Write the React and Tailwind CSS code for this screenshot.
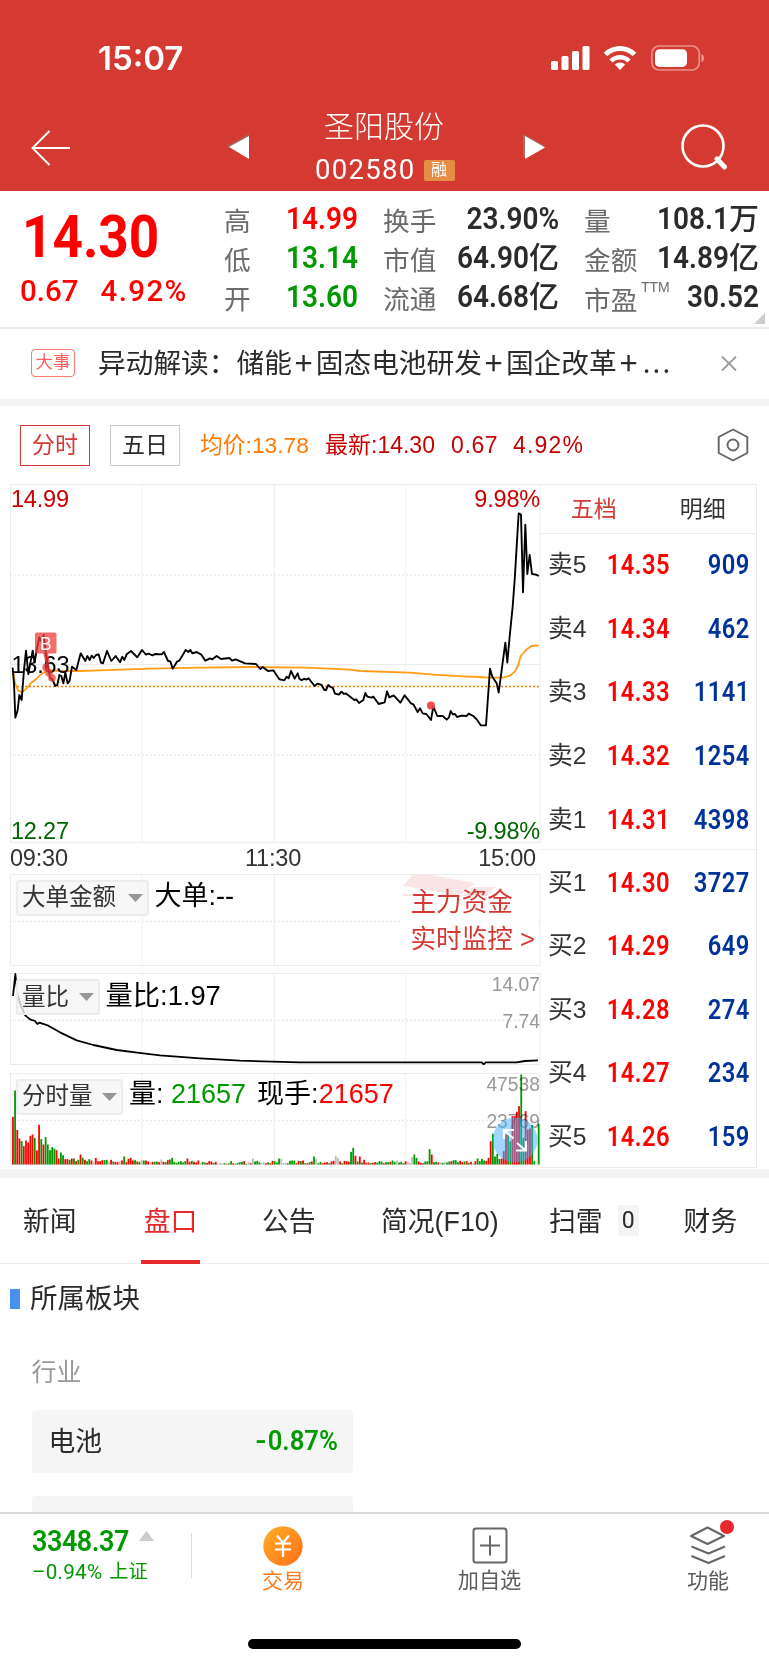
import React from "react";

const RED = "#fe0000";
const GREEN = "#009a00";

// [height, colour] of the first minutes; colours: r = up, g = down, n = unchanged
const OPENING = "143r 222g 104r 78r 70g 55r 72r 66r 86r 90r 80g 42r 119r 76g 60r 82g 60g 43g 52g 48g 43r 18r 36g 28g 16r 16r 14g 18r 18g 10r 14g 30r 20g 14r 10g 16g 12r 8n 20r 10r";
const CLOSING = "20r 70r 92g 24g 32g 17g 18r 40r 90r 90g 70g 145r 145r 158r 175r 270g 80g 160r 105r 108r 118g 10g 0g 122g";
const PEAKS = { 51: "24g", 53: "17r", 54: "20r", 72: "15g", 73: "20g", 80: "18r", 110: "18n", 122: "18g", 123: "17n", 138: "24g", 139: "18n", 148: "26n", 149: "20n", 155: "38g", 156: "50g", 157: "26r", 159: "24r", 161: "14r", 184: "30g", 185: "20g", 183: "22n", 191: "46g", 192: "30r", 213: "18g", 215: "17g", 218: "26r" };
const parse = (s) => ({ h: parseInt(s, 10), c: s.slice(-1) });

function volumeBars() {
  const open = OPENING.split(" ").map(parse);
  const close = CLOSING.split(" ").map(parse);
  const bars = [];
  for (let i = 0; i < 242; i++) {
    if (i < open.length) bars.push(open[i]);
    else if (i >= 242 - close.length) bars.push(close[i - 242 + close.length]);
    else if (PEAKS[i]) bars.push(parse(PEAKS[i]));
    else {
      const n = (i * 7919 + ((i * i * 31) % 97)) % 101;
      const base = i < 75 ? 7 : i > 85 && i < 108 ? 2 : i > 200 ? 5 : 4;
      bars.push({ h: base + (n % 9), c: n % 7 === 0 ? "n" : n % 2 ? "r" : "g" });
    }
  }
  return bars;
}
const BARS = volumeBars();
const BAR_FILL = { r: RED, g: GREEN, n: "#bcbcbc" };

function Grid({ top, bottom, mid, quarters = [] }) {
  return (
    <g stroke="#ebebeb" fill="none">
      <rect x="10.5" y={top} width="529.5" height={bottom - top} />
      <path d={`M274.3 ${top}V${bottom}`} />
      {mid && <path d={`M10 ${mid}H540`} />}
      <g strokeDasharray="2 2" strokeWidth="1.3">
        <path d={`M142 ${top}V${bottom}M405.5 ${top}V${bottom}`} />
        {quarters.map((y) => (
          <path key={y} d={`M10 ${y}H540`} />
        ))}
      </g>
    </g>
  );
}

function PriceChart() {
  return (
    <div className="relative h-[359px]">
      <svg className="block h-[359px] w-[531px]" viewBox="10 484 531 359">
        <Grid top={484.5} bottom={842.3} mid={664.5} quarters={[575, 755]} />
        <path d="M13 686.5H539" stroke="#ff7a00" strokeWidth="1.6" strokeDasharray="2 2" />
        <g fill="none" strokeLinejoin="round" strokeLinecap="round">
          <g stroke="#ff9d14" strokeWidth="5.4">
            <polyline transform="translate(0 600) scale(.33333)" points="38,205 45,250 55,272 66,277 80,265 92,250 108,238 120,225 145,210 180,213 240,213 300,211 450,206 600,203 760,201 840,202" />
            <polyline transform="translate(280 600) scale(.33333)" points="0,202 80,203 210,209 240,213 390,218 460,224 550,229 600,231 625,233 670,233 690,227 705,214 715,195 722,168 740,148 755,138 774,136" />
          </g>
          <g stroke="#000" strokeWidth="5.6">
            <polyline transform="translate(0 600) scale(.33333)" points="38,205 42,250 46,353 53,330 58,285 65,300 72,210 78,152 85,222 91,190 98,152 104,188 110,150 118,112 124,125 131,105 138,165 144,200 150,232 158,240 166,258 172,255 178,225 184,228 190,250 196,218 203,250 209,242 216,200 229,210 242,160 256,183 262,168 269,180 275,167 281,174 288,165 296,163 303,188 309,190 321,153 334,183 347,168 360,187 367,170 373,180 380,163 393,153 412,172 426,150 438,164 445,161 458,166 465,162 485,163 492,156 504,183 511,184 518,206 531,185 538,182 557,150 565,156 571,150 577,160 590,156 604,164 616,182 630,175 637,178 650,168 663,177 688,174 696,182 707,178 735,190 768,192 781,207 788,201 804,213 820,211 838,238" />
            <polyline transform="translate(280 600) scale(.33333)" points="0,238 13,241 20,230 26,235 33,213 44,236 53,220 58,236 65,241 72,236 78,239 86,235 92,243 104,258 112,251 125,255 133,270 138,270 145,255 153,262 158,262 165,281 177,284 184,275 192,282 197,280 223,300 229,298 237,309 250,300 256,279 262,290 275,293 280,290 296,312 314,307 321,274 328,292 341,286 361,308 374,286 393,310 400,313 413,336 420,325 428,340 439,342 453,360 460,320 472,348 488,348 500,359 507,352 512,333 518,343 525,342 531,351 545,347 560,348 566,341 580,348 590,358 602,376 618,376 630,206 637,230 650,250 656,278 676,128 682,188 688,120 698,20 704,-60 716,-260 723,-256 729,-23 736,-226 742,-78 749,-135 756,-78 768,-76 774,-73" />
          </g>
        </g>
        <circle cx="431" cy="705.5" r="4" fill="#ef3d3d" fillOpacity=".9" />
        <text x="11.500" y="672.5" fontSize="23.500" letterSpacing="-0.2" fill="#000" className="font-['Liberation_Sans']">13.63</text>
        <g fill="#ee3c3c" fillOpacity=".75">
          <path d="M43 653h5l2 10-4 2z" />
          <circle cx="46" cy="667.5" r="3.8" />
          <circle cx="49" cy="673" r="3.8" />
          <circle cx="52" cy="678" r="3.8" />
          <rect x="35" y="632.5" width="21.5" height="21" rx="1.5" />
        </g>
        <text x="45.8" y="649.5" fontSize="17.5" textAnchor="middle" fill="#fff" className="font-['Liberation_Sans']">B</text>
      </svg>
      <span className="absolute top-[1px] left-[1px] text-[23.5px] leading-[28px] tracking-[-0.2px] text-[#c80000]">14.99</span>
      <span className="absolute top-[1px] right-0 text-[23.5px] leading-[28px] tracking-[-0.2px] text-[#c80000]">9.98%</span>
      <span className="absolute bottom-[-2px] left-[1px] text-[23.5px] leading-[28px] tracking-[-0.2px] text-[#006400]">12.27</span>
      <span className="absolute right-0 bottom-[-2px] text-[23.5px] leading-[28px] tracking-[-0.2px] text-[#006400]">-9.98%</span>
    </div>
  );
}

function Dropdown({ label, width }) {
  return (
    <div className={`flex h-[36px] items-center justify-between rounded-[3px] border-2 border-[#ececec] bg-[#f5f5f5]/80 pr-[4px] pl-[4px] text-[23.5px] leading-none text-[#333] ${width}`}>
      <span className="pt-[1px]">{label}</span>
      <svg className="h-[8px] w-[15px]" viewBox="0 0 15 8"><path d="M0 0H15L7.5 8Z" fill="#969696" /></svg>
    </div>
  );
}

function SubCharts() {
  return (
    <div className="flex flex-col gap-[7.5px]">
      <div className="relative h-[92px]">
        <svg className="block h-[92px] w-[531px]" viewBox="10 873.5 531 92">
          <Grid top={874} bottom={965} quarters={[921]} />
        </svg>
        <div className="absolute top-[6px] left-[6px] flex items-center gap-[6px] text-[27px] leading-none text-black">
          <Dropdown label="大单金额" width="w-[132.5px]" />
          <span className="pb-[2px]">大单:--</span>
        </div>
        <div className="absolute top-[1px] right-[3px] h-[90px] w-[134px] bg-white">
          <svg className="absolute top-0 left-0 h-[24px] w-[100px]" viewBox="0 0 100 24" fill="#d43a32">
            <path d="M0 11L9 0H28L72 8L55 22L26 15Z" fillOpacity=".13" />
            <path d="M70 12H93L84 21H60Z" fillOpacity=".13" />
            <path d="M0 19H28V21H0Z" fillOpacity=".13" />
          </svg>
          <div className="relative pt-[9px] pl-[7.5px] text-[25.6px] leading-[37px] whitespace-nowrap text-[#d43a32]">
            <div>主力资金</div>
            <div>实时监控 <span>&gt;</span></div>
          </div>
        </div>
      </div>
      <div className="relative h-[92px]">
        <svg className="block h-[92px] w-[531px]" viewBox="10 973 531 92">
          <Grid top={973.5} bottom={1064.5} quarters={[1020.5]} />
          <g fill="none" stroke="#000" strokeWidth="5.4" strokeLinejoin="round">
            <polyline transform="translate(0 860) scale(.33333)" points="39,408 46,342 52,400 60,430 75,465 80,470 90,478 105,483 112,492 118,488 145,497 180,517 230,541 280,555 350,570 430,580 480,586 600,595 720,602 900,607 1140,607" />
            <polyline transform="translate(380 860) scale(.33333)" points="0,607 305,607 311,613 317,607 410,607 435,603 474,601" />
          </g>
        </svg>
        <div className="absolute top-[6px] left-[6px] flex items-center gap-[6px] text-[27.3px] leading-none text-black">
          <Dropdown label="量比" width="w-[83.5px]" />
          <span className="pb-[3px]">量比:1.97</span>
        </div>
        <span className="absolute top-0 right-0 text-[19.3px] leading-[23px] text-[#999]">14.07</span>
        <span className="absolute top-[37px] right-0 text-[19.3px] leading-[23px] text-[#999]">7.74</span>
      </div>
      <div className="relative h-[92px]">
        <svg className="block h-[92px] w-[531px]" viewBox="10 1072.5 531 92">
          <Grid top={1073} bottom={1164} quarters={[1120]} />
          <g transform="translate(12 1164) scale(.33333)">
            {BARS.map((b, i) => (
              <rect key={i} x={(i * 6.545).toFixed(1)} y={-b.h} width="5.4" height={b.h} fill={BAR_FILL[b.c]} />
            ))}
          </g>
        </svg>
        <div className="absolute top-[6px] left-[6px] flex items-center text-[27px] leading-none whitespace-nowrap text-black">
          <Dropdown label="分时量" width="w-[107px]" />
          <span className="ml-[6px] pb-[4px]">量: <span className="text-[#009a00]">21657</span></span>
          <span className="ml-[11px] pb-[4px]">现手:<span className="text-[#fe0000]">21657</span></span>
        </div>
        <span className="absolute top-0 right-0 text-[19.3px] leading-[23px] text-[#999] mix-blend-multiply">47538</span>
        <span className="absolute top-[37px] right-0 text-[19.3px] leading-[23px] text-[#999] mix-blend-multiply">23769</span>
        <svg className="absolute top-[44px] left-[482px] h-[46px] w-[46px]" viewBox="0 0 46 46">
          <circle cx="23" cy="23" r="22.500" fill="#40b0ff" fillOpacity=".5" />
          <path d="M12 22V13H22M12.500 13.500L21.500 21.500M25 26L33 33M34 24V33.500H24" fill="none" stroke="#fff" strokeWidth="2.200" />
        </svg>
      </div>
    </div>
  );
}

const BOOK = [
  ["卖5", "14.35", "909"], ["卖4", "14.34", "462"], ["卖3", "14.33", "1141"], ["卖2", "14.32", "1254"], ["卖1", "14.31", "4398"],
  ["买1", "14.30", "3727"], ["买2", "14.29", "649"], ["买3", "14.28", "274"], ["买4", "14.27", "234"], ["买5", "14.26", "159"],
];
const ROW_BOX = { 4: "h-[61px] pt-[3px]", 5: "h-[66px] pt-[2px] border-t border-[#f0f0f0]" };

function OrderBook() {
  return (
    <div className="h-[684px] w-[217px] border border-l-0 border-[#ebebeb]">
      <div className="flex h-[49px] items-center border-b border-[#ebebeb] text-[23px] leading-none text-[#333]">
        <span className="w-[108px] text-center text-[#d43a32]">五档</span>
        <span className="w-[109px] pl-[2px] text-center">明细</span>
      </div>
      {BOOK.map(([side, price, qty], i) => (
        <div key={side} className={`flex items-center pr-[6px] pl-[8px] leading-none ${ROW_BOX[i] || "h-[63.5px]"}`}>
          <span className="w-[40px] text-[24.7px] whitespace-nowrap text-[#333]">{side}</span>
          <span className="w-[82px] origin-right scale-x-[0.88] text-right font-['Roboto'] text-[27px] font-semibold tracking-[0.5px] text-[#fe0000]">{price}</span>
          <span className="ml-auto origin-right scale-x-[0.88] font-['Roboto'] text-[27px] font-semibold tracking-[0.5px] text-[#003399]">{qty}</span>
        </div>
      ))}
    </div>
  );
}

function Stat({ label, value, unit, color = "text-[#2b2b2b]", sup }) {
  return (
    <div className="flex h-[39px] items-center justify-between leading-none">
      <span className={`relative text-[26.7px] text-[#6b6b6b] ${sup ? "pt-[4px]" : "pt-[1px]"}`}>
        {label}
        {sup && <span className="absolute top-[-4px] left-[57px] text-[14px]">{sup}</span>}
      </span>
      <span className="flex items-center pb-[5px]">
        <span className={`origin-right scale-x-[0.89] font-['Roboto'] text-[31.5px] font-semibold ${color}`}>{value}</span>
        {unit && <span className="text-[30px] font-medium text-[#2b2b2b]">{unit}</span>}
      </span>
    </div>
  );
}

function Header() {
  return (
    <header className="h-[191px] bg-[#d43a32] text-white">
      <div className="flex h-[100px] items-center pt-[15px] pr-[64px] pl-[98px]">
        <span className="pt-[1px] font-['Inter'] text-[33px] leading-none font-semibold">15:07</span>
        <svg className="ml-auto h-[26px] w-[154px]" viewBox="551 44 154 26" fill="#fff">
          <rect x="551" y="60" width="7" height="9" rx="1.6" />
          <rect x="561.500" y="55" width="7" height="14" rx="1.600" />
          <rect x="572" y="50" width="7" height="19" rx="1.6" />
          <rect x="582.500" y="45" width="7" height="24" rx="1.600" />
          <g fill="none" stroke="#fff" strokeWidth="5">
            <path d="M605.500 53.500A20.500 20.500 0 0 1 634.500 53.500" />
            <path d="M611 60A12.500 12.500 0 0 1 629 60" strokeWidth="4.500" />
          </g>
          <path d="M620 69L614.800 63.600A7.400 7.400 0 0 1 625.200 63.600Z" />
          <rect x="651.800" y="45" width="47.500" height="24" rx="7.500" fill="none" stroke="#fff" strokeOpacity=".45" strokeWidth="1.700" />
          <rect x="655" y="48.200" width="32" height="17.700" rx="4.500" />
          <path d="M701.500 53V61Q704 60 704 57T701.500 53Z" fillOpacity=".5" />
        </svg>
      </div>
      <div className="flex h-[91px] items-start pl-[31px]">
        <svg className="mt-[29px] h-[38px] w-[40px]" viewBox="0 0 40 38" fill="none" stroke="#fff" strokeWidth="1.900">
          <path d="M18.500 2L1.500 19L18.500 36M1.500 19H39" />
        </svg>
        <svg className="mt-[34px] ml-[155px] h-[25px] w-[23px]" viewBox="0 0 23 25">
          <path d="M1 12L23 0V24Z" fill="#8b8078" fillOpacity=".6" /><path d="M3 13L23 2V25Z" fill="#fff" />
        </svg>
        <div className="ml-[66px] flex w-[140px] flex-col items-start">
          <div className="ml-[9px] h-[53px] pt-[12px] text-[30px] leading-[30px] font-light whitespace-nowrap">圣阳股份</div>
          <div className="flex h-[34px] items-center">
            <span className="font-['Roboto'] text-[27.5px] leading-none tracking-[1.3px]">002580</span>
            <span className="ml-[8px] flex h-[21px] w-[31px] items-center justify-center rounded-[2px] bg-[#e58d45] text-[16px] leading-none">融</span>
          </div>
        </div>
        <svg className="mt-[34px] ml-[68px] h-[25px] w-[23px]" viewBox="0 0 23 25">
          <path d="M0 0V24L22 12Z" fill="#8b8078" fillOpacity=".8" /><path d="M2 2V25L22 13.500Z" fill="#fff" />
        </svg>
        <svg className="mt-[24px] ml-[135px] h-[48px] w-[48px]" viewBox="0 0 48 48" fill="none" stroke="#fff">
          <circle cx="22" cy="22" r="20.500" strokeWidth="2.600" />
          <path d="M36 35L43.500 43" strokeWidth="5" strokeLinecap="round" />
        </svg>
      </div>
    </header>
  );
}

const Plus = () => <span className="mx-[4.3px] inline-block scale-[1.15]">+</span>;

export default function App() {
  return (
    <div className="flex h-[1665px] w-[769px] flex-col overflow-hidden bg-white font-['Liberation_Sans','Noto_Sans_CJK_SC',sans-serif]">
      <Header />

      <section className="relative flex h-[138px] border-b-2 border-[#ebebeb]">
        <div className="w-[224px] pl-[20px] leading-none text-[#fe0000]">
          <div className="mt-[16px] ml-[2px] h-[60px] w-[150px] origin-left scale-x-[0.9] font-['Roboto'] text-[59px] leading-[60px] font-bold">14.30</div>
          <div className="mt-[8px] flex gap-[22px] font-['Roboto'] text-[29.5px] leading-[33px] font-medium whitespace-nowrap">
            <span>0.67</span><span className="tracking-[1.4px]">4.92%</span>
          </div>
        </div>
        <div className="w-[134px] pt-[11px]">
          <Stat label="高" value="14.99" color="text-[#fe0000]" />
          <Stat label="低" value="13.14" color="text-[#009a00]" />
          <Stat label="开" value="13.60" color="text-[#009a00]" />
        </div>
        <div className="ml-[25px] w-[176px] pt-[11px]">
          <Stat label="换手" value="23.90%" />
          <Stat label="市值" value="64.90" unit="亿" />
          <Stat label="流通" value="64.68" unit="亿" />
        </div>
        <div className="ml-[25px] w-[175px] pt-[11px]">
          <Stat label="量" value="108.1" unit="万" />
          <Stat label="金额" value="14.89" unit="亿" />
          <Stat label="市盈" value="30.52" sup="TTM" />
        </div>
        <svg className="absolute right-[4px] bottom-[3px] h-[11px] w-[11px]" viewBox="0 0 11 11"><path d="M11 0V11H0Z" fill="#ccc" /></svg>
      </section>

      <section className="flex h-[70px] items-center pb-[2px] pl-[31px] leading-none">
        <span className="flex h-[28px] w-[44px] items-center justify-center rounded-[4px] border-[1.5px] border-[#ff7a70] text-[17.5px] text-[#ff5f55]">大事</span>
        <span className="ml-[23px] pb-[2px] text-[27.7px] whitespace-nowrap text-[#2b2b2b] font-['Noto_Sans_CJK_SC']">
          异动解读：储能<Plus />固态电池研发<Plus />国企改革<Plus /><span className="ml-[2px] tracking-[2.2px]">...</span>
        </span>
        <svg className="mr-[32px] ml-auto h-[15px] w-[16px]" viewBox="0 0 16 15"><path d="M1 .5L15 14.500M15 .5L1 14.500" stroke="#999" strokeWidth="1.800" /></svg>
      </section>
      <div className="h-[7px] bg-[#f4f4f4]" />

      <section className="flex h-[78px] items-center pl-[20px] text-[23px] leading-none whitespace-nowrap text-[#c80000]">
        <span className="flex h-[41px] w-[70px] items-center justify-center border border-[#d43a32] text-[#d43a32]">分时</span>
        <span className="ml-[20px] flex h-[41px] w-[70px] items-center justify-center border border-[#ccc] text-[#2b2b2b]">五日</span>
        <span className="ml-[20px] w-[125px] text-[22.8px] text-[#ff7a00]">均价:13.78</span>
        <span className="w-[126px]">最新:14.30</span>
        <span className="w-[62px] tracking-[0.6px]">0.67</span>
        <span className="tracking-[1.2px]">4.92%</span>
        <svg className="mr-[20px] ml-auto h-[34px] w-[32px]" viewBox="0 0 32 34" fill="none" stroke="#666" strokeWidth="1.900" strokeLinejoin="round">
          <path d="M16 1.500L30.300 9V25L16 32.500L1.700 25V9Z" /><circle cx="16" cy="17" r="5.500" />
        </svg>
      </section>

      <section className="flex h-[685px] pl-[10px]">
        <div className="w-[530px]">
          <PriceChart />
          <div className="flex h-[30.5px] items-center justify-between pt-[1px] pr-[4px] text-[23.5px] leading-none tracking-[-0.2px] text-[#333]">
            <span>09:30</span><span>11:30</span><span>15:00</span>
          </div>
          <SubCharts />
        </div>
        <OrderBook />
      </section>
      <div className="h-[9px] shrink-0 bg-[#f4f4f4]" />

      <nav className="flex h-[86px] shrink-0 items-center border-b border-[#ebebeb] pl-[23px] text-[26.8px] leading-none whitespace-nowrap text-[#2b2b2b]">
        <span className="w-[118px] pt-[3px]">新闻</span>
        <span className="relative flex h-[85px] w-[59px] items-center justify-center pt-[3px] text-[#e8292b]">
          盘口<span className="absolute bottom-[-1px] left-0 h-[4.5px] w-[59px] bg-[#e8292b]" />
        </span>
        <span className="ml-[62px] w-[119px] pt-[3px]">公告</span>
        <span className="w-[168px] pt-[3px]">简况(F10)</span>
        <span className="pt-[3px]">扫雷</span>
        <span className="ml-[15px] flex h-[31px] w-[21px] items-center justify-center bg-[#f4f4f4] font-['Roboto'] text-[23px]">0</span>
        <span className="ml-[45px] pt-[3px]">财务</span>
      </nav>

      <main className="h-[248px] shrink-0 overflow-hidden">
        <div className="flex h-[69px] items-center gap-[10px] pl-[10px] text-[27.5px] leading-none text-[#2b2b2b]">
          <span className="h-[20px] w-[10px] bg-[#4a90ee]" />所属板块
        </div>
        <div className="pl-[31.5px]">
          <div className="flex h-[77px] items-center pt-[1px] text-[25px] leading-none text-[#999]">行业</div>
          <div className="flex h-[63px] w-[321px] items-center justify-between rounded-[4px] bg-[#f5f5f5] pr-[15px] pl-[17px] text-[26.800px] leading-none text-[#2b2b2b]">
            <span className="pt-[1px]">电池</span>
            <span className="flex origin-right scale-x-[0.95] items-center font-['Roboto'] text-[27px] font-semibold text-[#009a00]">
              <span className="mr-[1px] inline-block w-[12px] origin-left scale-x-[1.2]">-</span>0.87%
            </span>
          </div>
          <div className="mt-[23px] h-[63px] w-[321px] rounded-[4px] bg-[#f5f5f5]" />
        </div>
      </main>

      <footer className="shrink-0 border-t-2 border-[#d9d9d9] bg-white">
        <div className="flex h-[125px] items-start pl-[32px]">
          <div className="w-[159px] pt-[13px] text-[#009a00]">
            <div className="flex items-start gap-[9px] leading-[28px]">
              <span className="w-[98px] font-['Roboto'] text-[29px] font-semibold tracking-[-0.5px]"><span className="inline-block origin-left scale-x-[0.93]">3348.37</span></span>
              <svg className="mt-[4px] h-[10px] w-[15px]" viewBox="0 0 15 10"><path d="M0 10L7.500 0L15 10Z" fill="#ccc" /></svg>
            </div>
            <div className="mt-[5px] flex gap-[7px] text-[20px] leading-[24px]">
              <span className="font-['Roboto'] text-[20.700px] tracking-[0.200px]">–0.94%</span><span className="text-[19.300px]">上证</span>
            </div>
          </div>
          <div className="mt-[19px] h-[45px] w-px bg-[#ddd]" />
          <div className="ml-[70px] flex w-[42px] flex-col items-center pt-[12px] text-[21px] leading-none text-[#ff7a1c]">
            <svg className="h-[40px] w-[40px]" viewBox="0 0 40 40">
              <defs><linearGradient id="coin" x1="0" y1="0" x2="1" y2="1"><stop offset="0" stopColor="#ffae25" /><stop offset="1" stopColor="#ff6f1b" /></linearGradient></defs>
              <circle cx="20" cy="20" r="19.700" fill="url(#coin)" />
              <path d="M14 9.500L20 17L26 9.500M20 17V31M12 17.500H28M12 23.500H28" fill="none" stroke="#fff" strokeWidth="2.200" />
            </svg>
            <span className="mt-[4px] whitespace-nowrap">交易</span>
          </div>
          <div className="ml-[154px] flex w-[63px] flex-col items-center pt-[12px] text-[21.2px] leading-none text-[#5c5c5c]">
            <svg className="h-[38px] w-[36px]" viewBox="0 0 36 38" fill="none" stroke="#666" strokeWidth="2">
              <rect x="1.500" y="2.500" width="33" height="34" rx="2.500" /><path d="M18 9.500V29.500M8 19.500H28" />
            </svg>
            <span className="mt-[6px] whitespace-nowrap">加自选</span>
          </div>
          <div className="relative ml-[166px] flex w-[42px] flex-col items-center pt-[12px] text-[21px] leading-none text-[#5c5c5c]">
            <svg className="h-[38px] w-[36px]" viewBox="0 0 36 38" fill="none" stroke="#666" strokeWidth="2" strokeLinejoin="round">
              <path d="M17.500 1.500L34 10L17.500 18L1 10ZM1.500 20.500L18.500 27.500L35 20.500M1.500 30L18.500 37L35 30" />
            </svg>
            <span className="absolute top-[6px] left-[33px] h-[14px] w-[14px] rounded-full bg-[#e8292b]" />
            <span className="mt-[6px] whitespace-nowrap">功能</span>
          </div>
        </div>
        <div className="mx-auto h-[10px] w-[273px] rounded-full bg-black" />
      </footer>
    </div>
  );
}
